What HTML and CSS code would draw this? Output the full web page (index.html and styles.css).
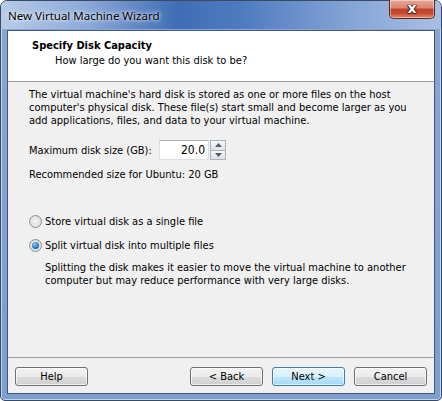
FILE: index.html
```html
<!DOCTYPE html>
<html>
<head>
<meta charset="utf-8">
<link rel="stylesheet" href="styles.css">
</head>
<body>
<div class="window">
  <div class="titlebar">
    <span class="title">New Virtual Machine Wizard</span>
    <div class="close"><span class="x">x</span></div>
  </div>
  <div class="client">
    <div class="header">
      <div class="h-title">Specify Disk Capacity</div>
      <div class="h-sub">How large do you want this disk to be?</div>
    </div>
    <div class="content">
      <p class="intro">The virtual machine's hard disk is stored as one or more files on the host computer's physical disk. These file(s) start small and become larger as you add applications, files, and data to your virtual machine.</p>
      <div class="size-row">
        <span class="size-label">Maximum disk size (GB):</span>
        <div class="spin">
          <div class="spin-input">20.0</div>
          <div class="spin-btns">
            <div class="spin-btn"><svg width="7" height="4" viewBox="0 0 7 4"><path d="M0 4 L3.5 0 L7 4Z" fill="#4a5c82"/></svg></div>
            <div class="spin-btn"><svg width="7" height="4" viewBox="0 0 7 4"><path d="M0 0 L3.5 4 L7 0Z" fill="#4a5c82"/></svg></div>
          </div>
        </div>
      </div>
      <div class="recommend">Recommended size for Ubuntu: 20 GB</div>
      <label class="radio r1"><span class="dot"></span>Store virtual disk as a single file</label>
      <label class="radio r2"><span class="dot on"></span>Split virtual disk into multiple files</label>
      <p class="desc">Splitting the disk makes it easier to move the virtual machine to another computer but may reduce performance with very large disks.</p>
    </div>
    <div class="footer">
      <button class="btn">Help</button>
      <div class="spacer"></div>
      <button class="btn">&lt; Back</button>
      <button class="btn default">Next &gt;</button>
      <button class="btn">Cancel</button>
    </div>
  </div>
</div>
</body>
</html>
```
FILE: styles.css
```css
html, body {
  margin: 0;
  padding: 0;
  background: #ffffff;
}
body {
  width: 442px;
  height: 401px;
  overflow: hidden;
  font-family: "DejaVu Sans Condensed", "DejaVu Sans", sans-serif;
}
.window {
  box-sizing: border-box;
  width: 442px;
  height: 401px;
  border: 1px solid #3a4a60;
  border-radius: 7px 7px 5px 5px;
  background: linear-gradient(180deg, #9fb9df 0px, #86a6d6 30px, #7b9dd0 100%);
  display: flex;
  flex-direction: column;
  padding: 0 6px 6px 6px;
  box-shadow: inset 0 0 0 1px rgba(255,255,255,0.55);
}
.titlebar {
  height: 28px;
  display: flex;
  align-items: center;
  justify-content: space-between;
  margin: 0 -6px;
  padding: 0 6px 0 7px;
  background: linear-gradient(90deg, #b7cbe8 0%, #8aa8d8 20%, #3f6db5 40%, #4f7cc0 55%, #86a5d6 80%, #a8bfe4 100%);
  border-radius: 6px 6px 0 0;
}
.title {
  font-family: "Noto Sans", "DejaVu Sans", sans-serif;
  font-size: 11.5px;
  color: #000;
  margin-top: 1px;
  text-shadow: 0 0 6px rgba(255,255,255,0.9), 0 0 3px rgba(255,255,255,0.9);
}
.close {
  align-self: flex-start;
  width: 46px;
  height: 19px;
  margin-top: -1px;
  box-sizing: border-box;
  border: 1px solid #5a2a24;
  border-top: none;
  border-radius: 0 0 5px 5px;
  background: linear-gradient(180deg, #e8a898 0%, #d98470 45%, #c0402a 50%, #c84a32 75%, #e28a6a 100%);
  display: flex;
  align-items: center;
  justify-content: center;
  box-shadow: inset 0 0 0 1px rgba(255,255,255,0.4);
}
.x {
  font-family: "DejaVu Sans", sans-serif;
  font-weight: bold;
  font-size: 14px;
  line-height: 14px;
  color: #fff;
  margin-top: -2px;
  text-shadow: 0 0 1px #3a2020, 1px 0 1px #3a2020, -1px 0 1px #3a2020, 0 1px 1px #3a2020;
}
.client {
  flex: 1;
  border: 1px solid #445670;
  background: #f0f0f0;
  display: flex;
  flex-direction: column;
  font-size: 11px;
  line-height: 13px;
  color: #000;
  margin-top: 1px;
}
.header {
  height: 51px;
  box-sizing: border-box;
  background: #fff;
  border-bottom: 1px solid #a0a0a0;
  padding: 8px 0 0 24px;
}
.h-title {
  font-weight: bold;
}
.h-sub {
  margin-top: 2px;
  padding-left: 23px;
}
.content {
  flex: 1;
  padding: 6px 8px 0 21px;
}
.intro {
  margin: 0;
}
.size-row {
  display: flex;
  align-items: center;
  margin-top: 13px;
  height: 20px;
}
.size-label {
  width: 130px;
  flex-shrink: 0;
  white-space: nowrap;
}
.spin {
  display: flex;
  height: 20px;
}
.spin-input {
  box-sizing: border-box;
  width: 50px;
  height: 20px;
  background: #fff;
  border: 1px solid #dcdfe4;
  border-top-color: #abadb3;
  text-align: right;
  padding: 3px 3px 0 0;
  font-size: 12px;
}
.spin-btns {
  display: flex;
  flex-direction: column;
  width: 17px;
  height: 20px;
}
.spin-btn {
  flex: 1;
  box-sizing: border-box;
  border: 1px solid #a9b2c0;
  background: linear-gradient(180deg, #f6f6f6, #e2e2e2);
  display: flex;
  align-items: center;
  justify-content: center;
  margin: 0 0 0 1px;
}
.spin-btn + .spin-btn {
  border-top: none;
}
.recommend {
  margin-top: 8px;
}
.radio {
  display: flex;
  align-items: center;
}
.r1 {
  margin-top: 34px;
}
.r2 {
  margin-top: 11px;
}
.dot {
  box-sizing: border-box;
  width: 13px;
  height: 13px;
  border-radius: 50%;
  border: 1px solid #8e8f8f;
  background: radial-gradient(circle at 50% 50%, #f4f4f4 0%, #e2e2e2 60%, #d0d0d0 100%);
  margin-right: 3px;
  margin-left: 0;
  position: relative;
}
.dot.on::after {
  content: "";
  position: absolute;
  left: 2px;
  top: 2px;
  width: 7px;
  height: 7px;
  border-radius: 50%;
  background: radial-gradient(circle at 40% 35%, #8ad0f8 0%, #2b7ac4 55%, #17457a 100%);
}
.desc {
  margin: 9px 0 0 16px;
}
.footer {
  height: 36px;
  box-sizing: border-box;
  border-top: 1px solid #a0a0a0;
  display: flex;
  align-items: flex-start;
  padding: 9px 7px 0 7px;
  gap: 9px;
}
.spacer {
  flex: 1;
}
.btn {
  box-sizing: border-box;
  width: 73px;
  height: 19px;
  border: 1px solid #707070;
  border-radius: 3px;
  background: linear-gradient(180deg, #f2f2f2 0%, #ebebeb 50%, #dddddd 51%, #cfcfcf 100%);
  box-shadow: inset 0 0 0 1px rgba(255,255,255,0.7);
  font-family: "DejaVu Sans Condensed", "DejaVu Sans", sans-serif;
  font-size: 11px;
  color: #000;
  padding: 0;
  line-height: 15px;
}
.btn.default {
  border-color: #3c7fb1;
  background: linear-gradient(180deg, #eaf6fd 0%, #d9f0fc 50%, #bee6fd 51%, #a7d9f5 100%);
  box-shadow: inset 0 0 0 1px rgba(255,255,255,0.6);
}
```
